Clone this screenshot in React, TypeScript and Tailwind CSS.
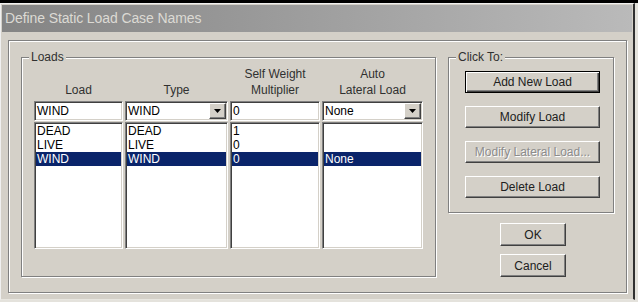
import React from 'react';

const sunken =
  'border border-t-[#808080] border-l-[#808080] border-b-white border-r-white shadow-[inset_1px_1px_0_#404040,inset_-1px_-1px_0_#d4d0c8] bg-white';

const raised =
  'border border-t-white border-l-white border-b-[#404040] border-r-[#404040] shadow-[inset_-1px_-1px_0_#808080,inset_1px_1px_0_#d4d0c8] bg-[#d4d0c8]';

interface Column {
  header: string[];
  width: string;
  value: string;
  combo: boolean;
  rows: string[];
}

const columns: Column[] = [
  { header: ['Load'], width: 'w-[89px]', value: 'WIND', combo: false, rows: ['DEAD', 'LIVE', 'WIND'] },
  { header: ['Type'], width: 'w-[103px]', value: 'WIND', combo: true, rows: ['DEAD', 'LIVE', 'WIND'] },
  { header: ['Self Weight', 'Multiplier'], width: 'w-[90px]', value: '0', combo: false, rows: ['1', '0', '0'] },
  { header: ['Auto', 'Lateral Load'], width: 'w-[101px]', value: 'None', combo: true, rows: ['', '', 'None'] },
];

function GroupBox({ label, className, children }: { label: string; className: string; children: React.ReactNode }) {
  return (
    <div className={`relative border border-[#808080] shadow-[1px_1px_0_#fff,inset_1px_1px_0_#fff] ${className}`}>
      <span className="absolute -top-[8px] left-[7px] px-[2px] bg-[#d4d0c8] leading-[14px] text-[#303030]">
        {label}
      </span>
      {children}
    </div>
  );
}

function Button({ label, isDefault, disabled }: { label: string; isDefault?: boolean; disabled?: boolean }) {
  const look = isDefault
    ? 'border border-black bg-[#d4d0c8] shadow-[inset_1px_1px_0_#fff,inset_-1px_-1px_0_#404040,inset_-2px_-2px_0_#808080]'
    : raised;
  return (
    <div
      className={`flex items-center justify-center ${look} ${
        disabled ? 'text-[#8c8c8c] [text-shadow:1px_1px_0_#fff]' : 'text-[#202020]'
      }`}
    >
      {label}
    </div>
  );
}

function DropArrow() {
  return (
    <div className={`w-[17px] h-[16px] flex items-center justify-center ${raised}`}>
      <svg width="7" height="4" viewBox="0 0 7 4">
        <path d="M0 0h7L3.5 4z" fill="#000" />
      </svg>
    </div>
  );
}

export default function App() {
  return (
    <div className="w-[638px] h-[302px] overflow-hidden bg-[#e4e2dc] flex flex-col text-[12px] font-['Liberation_Sans',Arial,sans-serif]">
      <div className="h-[3px] bg-black shrink-0" />
      <div className="flex flex-1">
        <div className="w-[635px] h-[297px] flex flex-col bg-[#d4d0c8] border-t border-l border-t-[#f0f0f0] border-l-[#f0f0f0] border-r-2 border-r-[#303030] border-b border-b-[#e8e6e0]">
          <div className="h-[27px] mx-[1px] mt-[1px] flex items-center px-[3px] bg-gradient-to-r from-[#848484] to-[#bababa]">
            <span className="text-[14px] text-[#dcdad4] tracking-[-0.1px]">Define Static Load Case Names</span>
          </div>

          <div className="mt-[8px] ml-[7px] w-[619px] h-[253px] border border-[#808080] shadow-[1px_1px_0_#fff,inset_1px_1px_0_#fff] flex gap-[12px] px-[12px] pt-[16px]">
            <GroupBox label="Loads" className="w-[415px] h-[220px] pt-[8px] pl-[12px]">
              <div className="flex gap-[2px]">
                {columns.map((c) => (
                  <div key={c.header[0]} className={`flex flex-col ${c.width}`}>
                    <div className="h-[32px] flex flex-col justify-end items-center leading-[16px] text-[#303030]">
                      {c.header.map((h) => (
                        <span key={h}>{h}</span>
                      ))}
                    </div>
                    <div className={`mt-[3px] h-[20px] flex items-center pl-[2px] pr-[1px] ${sunken}`}>
                      <span className="flex-1 leading-[14px]">{c.value}</span>
                      {c.combo && <DropArrow />}
                    </div>
                    <div className={`mt-[1px] h-[127px] pt-[1px] px-[1px] ${sunken}`}>
                      {c.rows.map((r, i) => (
                        <div
                          key={i}
                          className={`h-[14px] leading-[14px] pl-[1px] ${
                            i === 2 ? 'bg-[#0a246a] text-white' : 'text-black'
                          }`}
                        >
                          {r}
                        </div>
                      ))}
                    </div>
                  </div>
                ))}
              </div>
            </GroupBox>

            <div className="w-[166px] flex flex-col">
              <GroupBox label="Click To:" className="h-[156px] pt-[13px] pl-[16px] pr-[13px]">
                <div className="flex flex-col gap-[13px] [&>div]:h-[22px]">
                  <Button label="Add New Load" isDefault />
                  <Button label="Modify Load" />
                  <Button label="Modify Lateral Load..." disabled />
                  <Button label="Delete Load" />
                </div>
              </GroupBox>
              <div className="mt-[10px] ml-[52px] w-[66px] flex flex-col gap-[8px] [&>div]:h-[23px]">
                <Button label="OK" />
                <Button label="Cancel" />
              </div>
            </div>
          </div>
        </div>
      </div>
    </div>
  );
}
